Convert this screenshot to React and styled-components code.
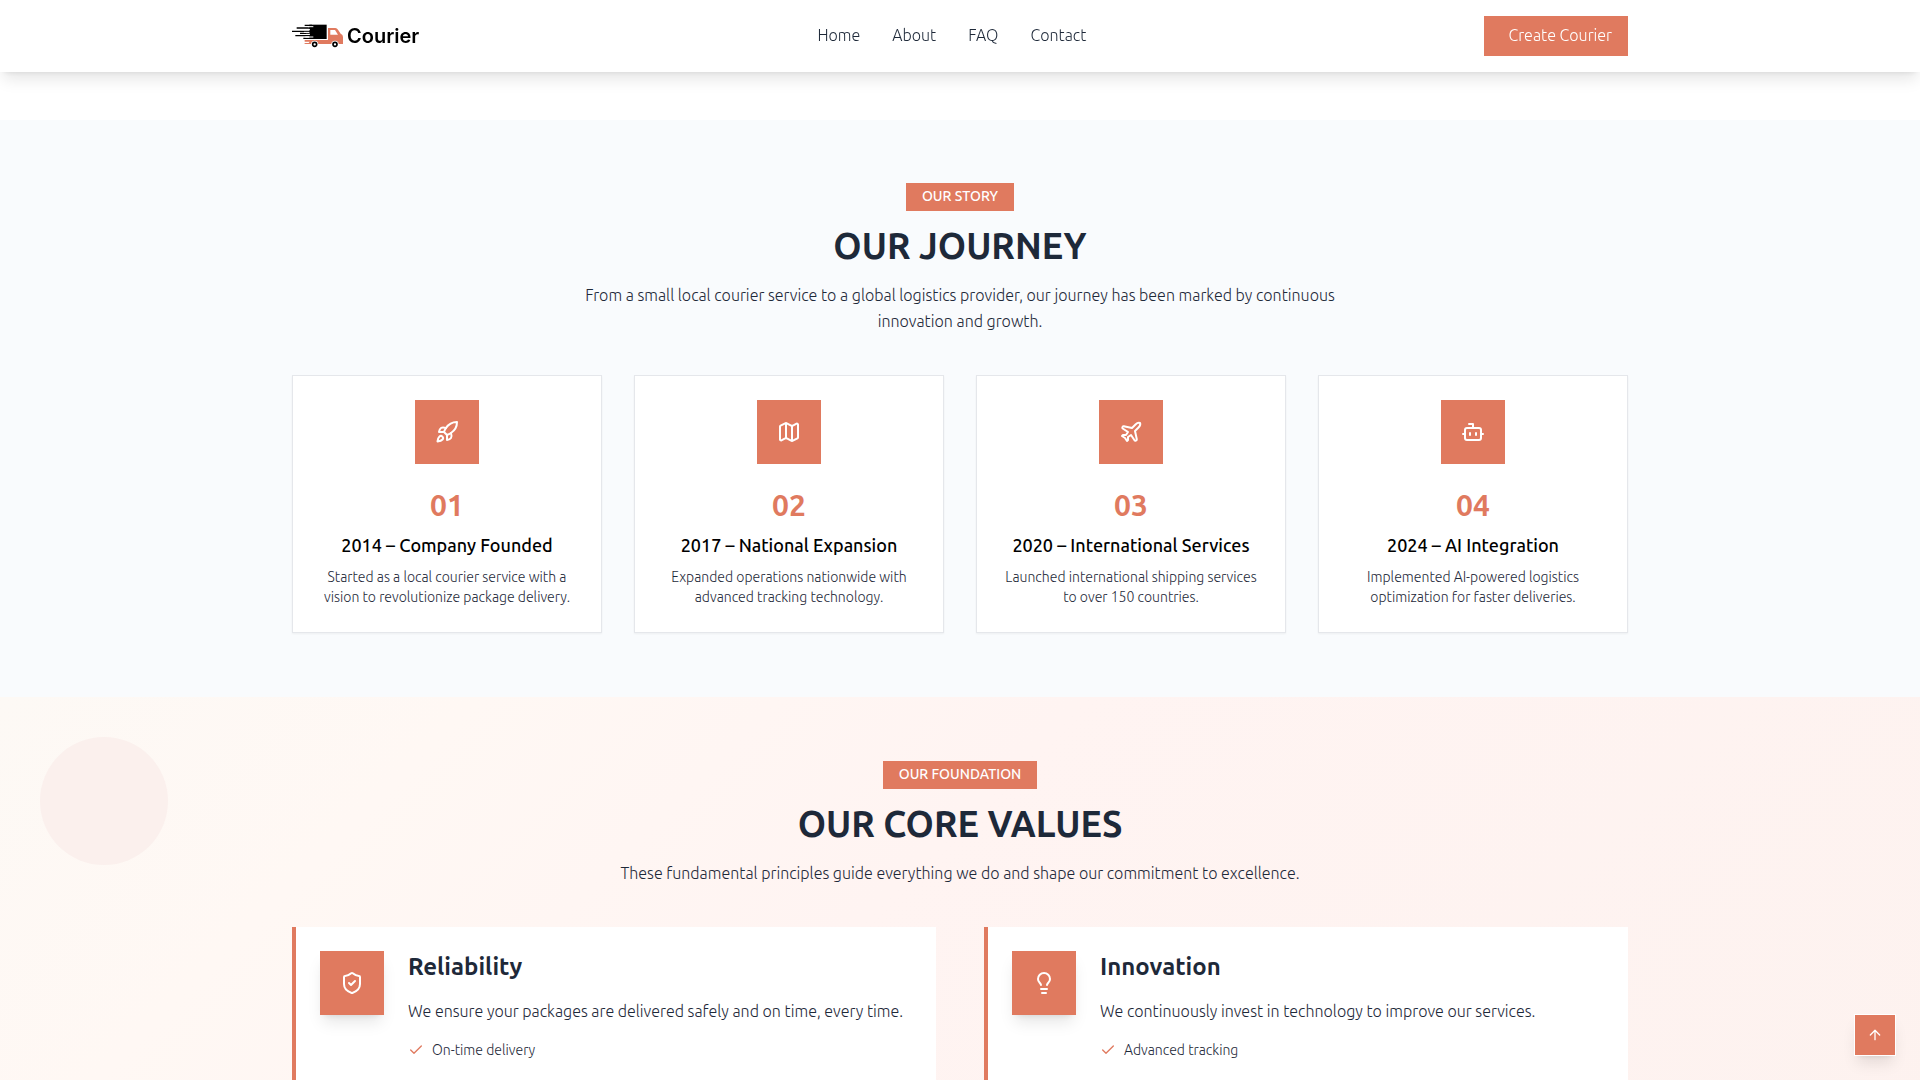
import { ArrowUp, Bot, Check, Lightbulb, Map, Plane, Rocket, ShieldCheck } from 'lucide-react'
import styled, { createGlobalStyle } from 'styled-components'


const links = ['Home', 'About', 'FAQ', 'Contact']

const milestones = [
	{
		icon: Rocket,
		title: '2014 – Company Founded',
		text: 'Started as a local courier service with a vision to revolutionize package delivery.',
	},
	{
		icon: Map,
		title: '2017 – National Expansion',
		text: 'Expanded operations nationwide with advanced tracking technology.',
	},
	{
		icon: Plane,
		title: '2020 – International Services',
		text: 'Launched international shipping services to over 150 countries.',
	},
	{
		icon: Bot,
		title: '2024 – AI Integration',
		text: 'Implemented AI-powered logistics optimization for faster deliveries.',
	},
]

const values = [
	{
		icon: ShieldCheck,
		title: 'Reliability',
		text: 'We ensure your packages are delivered safely and on time, every time.',
		points: ['On-time delivery'],
	},
	{
		icon: Lightbulb,
		title: 'Innovation',
		text: 'We continuously invest in technology to improve our services.',
		points: ['Advanced tracking'],
	},
]

const TruckLogo = () => (
	<svg width="52" height="24" viewBox="0 0 156 72" aria-hidden="true">
		<path fill="#e07a5f" d="M38 48H108V12H130Q135 12 138 17L146 29Q153 32 153 39V60H36L40 57H50L53 53H38Z" />
		<path fill="#fff" d="M115 18H129L138 32H115Z" />
		<path fill="#000" d="M52 2H104V45H52Z" />
		<path stroke="#000" strokeWidth="4" d="M38 4H60M14 12H60M0 22H60M24 28H60M10 35H60M34 43H60" />
		<path stroke="#fff" strokeWidth="3" d="M48 8H64M28 17H54M36 25H52M42 31H54M40 39H64" />
		<circle cx="68" cy="61" r="11" fill="#fff" />
		<circle cx="129" cy="61" r="11" fill="#fff" />
		<circle cx="68" cy="61" r="6" fill="none" stroke="#000" strokeWidth="5" />
		<circle cx="129" cy="61" r="6" fill="none" stroke="#000" strokeWidth="5" />
	</svg>
)

const SectionHeading = ({ badge, title, children }) => (
	<Heading>
		<Badge>{badge}</Badge>
		<Title>{title}</Title>
		<Lead>{children}</Lead>
	</Heading>
)

const App = () => {
	const handleScrollTop = () => window.scrollTo({ top: 0, behavior: 'smooth' })

	return (
		<>
			<GlobalStyle />

			<Header>
				<HeaderInner>
					<Brand href="#home">
						<TruckLogo />
						Courier
					</Brand>

					<Nav>
						{links.map(link => (
							<NavLink key={link} href={`#${link.toLowerCase()}`}>{link}</NavLink>
						))}
					</Nav>

					<CreateButton type="button">Create Courier</CreateButton>
				</HeaderInner>
			</Header>

			<main>
				<Journey>
					<Container>
						<SectionHeading badge="OUR STORY" title="OUR JOURNEY">
							From a small local courier service to a global logistics provider, our journey has been
							marked by continuous innovation and growth.
						</SectionHeading>

						<MilestoneGrid>
							{milestones.map(({ icon: Icon, title, text }, index) => (
								<Milestone key={title}>
									<IconBox>
										<Icon size={24} />
									</IconBox>
									<Step>{`0${index + 1}`}</Step>
									<MilestoneTitle>{title}</MilestoneTitle>
									<MilestoneText>{text}</MilestoneText>
								</Milestone>
							))}
						</MilestoneGrid>
					</Container>
				</Journey>

				<Values>
					<Circle />
					<Container>
						<SectionHeading badge="OUR FOUNDATION" title="OUR CORE VALUES">
							These fundamental principles guide everything we do and shape our commitment to excellence.
						</SectionHeading>

						<ValueGrid>
							{values.map(({ icon: Icon, title, text, points }) => (
								<Value key={title}>
									<IconBox $raised>
										<Icon size={24} />
									</IconBox>
									<div>
										<ValueTitle>{title}</ValueTitle>
										<ValueText>{text}</ValueText>
										<Points>
											{points.map(point => (
												<Point key={point}>
													<Check size={16} color="#e07a5f" />
													{point}
												</Point>
											))}
										</Points>
									</div>
								</Value>
							))}
						</ValueGrid>
					</Container>
				</Values>
			</main>

			<TopButton type="button" aria-label="Back to top" onClick={handleScrollTop}>
				<ArrowUp size={16} />
			</TopButton>
		</>
	)
}


export default App



const GlobalStyle = createGlobalStyle`
	*, *::before, *::after {
		box-sizing: border-box;
	}

	body {
		margin: 0;
		height: 100vh;
		overflow: hidden;
		background: #fff;
		color: #1e2939;
		font-family: Ubuntu, 'Open Sans', sans-serif;
		font-size: 16px;
		font-weight: 300;
		line-height: 24px;
	}

	h2, h3, p, ul {
		margin: 0;
		padding: 0;
	}
`

const Container = styled.div`
	position: relative;
	max-width: 1400px;
	margin: 0 auto;
	padding: 0 32px;
`

const Header = styled.header`
	position: sticky;
	top: 0;
	z-index: 10;
	background: #fff;
	box-shadow: 0 10px 15px -3px rgba(0, 0, 0, 0.1), 0 4px 6px -4px rgba(0, 0, 0, 0.1);
`

const HeaderInner = styled(Container)`
	display: flex;
	align-items: center;
	justify-content: space-between;
	padding-top: 16px;
	padding-bottom: 16px;
`

const Brand = styled.a`
	display: flex;
	align-items: center;
	gap: 3px;
	color: #000;
	font-family: Inter, sans-serif;
	font-size: 20px;
	font-weight: 600;
	text-decoration: none;
`

const Nav = styled.nav`
	display: flex;
	gap: 32px;
	padding-bottom: 2px;
`

const NavLink = styled.a`
	color: #1e2939;
	text-decoration: none;
`

const CreateButton = styled.button`
	padding: 7px 16px 9px 24px;
	border: 0;
	background: #e07a5f;
	color: #fff;
	font: inherit;
	cursor: pointer;
`

const Journey = styled.section`
	margin-top: 48px;
	padding: 63px 0 64px;
	background: #f9fbfd;
`

const Values = styled.section`
	position: relative;
	padding: 64px 0;
	background: linear-gradient(135deg, #fdf9f5 0%, #fff8f4 20%, #fff4f2 45%, #fdf2ef 100%);
`

const Circle = styled.div`
	position: absolute;
	top: 40px;
	left: 40px;
	width: 128px;
	height: 128px;
	border-radius: 50%;
	background: #fbf0ed;
`

const Heading = styled.div`
	display: flex;
	flex-direction: column;
	align-items: center;
	margin-bottom: 41px;
	text-align: center;
`

const Badge = styled.span`
	padding: 3px 16px 5px;
	background: #e07a5f;
	color: #fff;
	font-size: 14px;
	font-weight: 500;
	line-height: 20px;
`

const Title = styled.h2`
	margin: 15px 0 16px;
	font-size: 36px;
	font-weight: 600;
	line-height: 40px;
`

const Lead = styled.p`
	max-width: 768px;
	line-height: 26px;
`

const MilestoneGrid = styled.div`
	display: grid;
	grid-template-columns: repeat(4, 1fr);
	gap: 32px;
`

const Milestone = styled.article`
	display: flex;
	flex-direction: column;
	align-items: center;
	padding: 24px 24px 25px;
	border: 1px solid #e5e7eb;
	background: #fff;
	box-shadow: 0 1px 2px rgba(0, 0, 0, 0.05);
	text-align: center;
`

const IconBox = styled.div`
	display: flex;
	flex-shrink: 0;
	align-items: center;
	justify-content: center;
	width: 64px;
	height: 64px;
	background: #e07a5f;
	color: #fff;
	box-shadow: ${p => p.$raised ? '0 10px 15px -3px rgba(0, 0, 0, 0.1), 0 4px 6px -4px rgba(0, 0, 0, 0.1)' : 'none'};
`

const Step = styled.p`
	margin-top: 23px;
	color: #e07a5f;
	font-size: 30px;
	font-weight: 600;
	line-height: 36px;
`

const MilestoneTitle = styled.h3`
	margin-top: 8px;
	color: #000;
	font-size: 18px;
	font-weight: 500;
	line-height: 28px;
`

const MilestoneText = styled.p`
	margin-top: 8px;
	font-size: 14px;
	line-height: 20px;
`

const ValueGrid = styled.div`
	display: grid;
	grid-template-columns: repeat(2, 1fr);
	gap: 48px;
`

const Value = styled.article`
	display: flex;
	align-items: flex-start;
	gap: 24px;
	min-height: 184px;
	padding: 24px;
	border-left: 4px solid #e07a5f;
	background: #fff;
`

const ValueTitle = styled.h3`
	font-size: 24px;
	font-weight: 600;
	line-height: 32px;
`

const ValueText = styled.p`
	margin-top: 15px;
	line-height: 26px;
`

const Points = styled.ul`
	margin-top: 16px;
	list-style: none;
`

const Point = styled.li`
	display: flex;
	align-items: center;
	gap: 8px;
	font-size: 14px;
	line-height: 20px;
`

const TopButton = styled.button`
	position: fixed;
	right: 24px;
	bottom: 24px;
	display: flex;
	align-items: center;
	justify-content: center;
	width: 42px;
	height: 42px;
	padding: 0;
	border: 1px solid #fff;
	background: #e07a5f;
	color: #fff;
	box-shadow: 0 10px 15px -3px rgba(0, 0, 0, 0.1), 0 4px 6px -4px rgba(0, 0, 0, 0.1);
	cursor: pointer;
`
